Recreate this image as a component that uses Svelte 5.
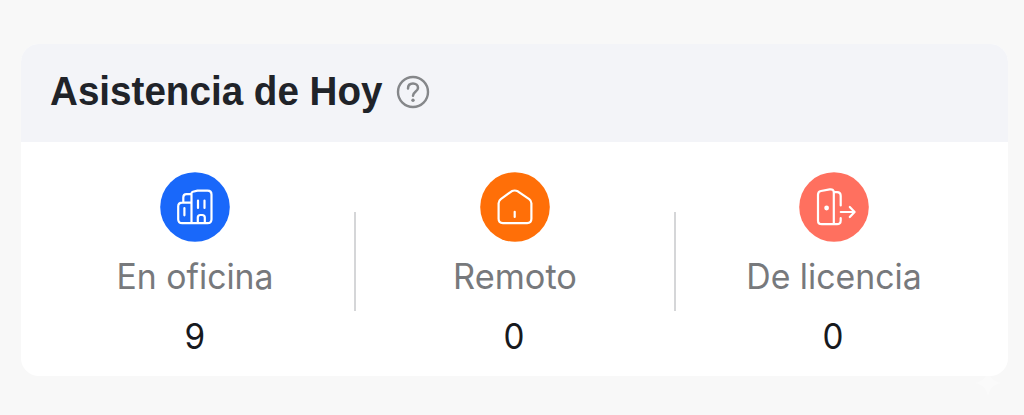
<script>
  const items = [
    { kind: 'office', label: 'En oficina', value: 9, width: 157 },
    { kind: 'remote', label: 'Remoto', value: 0, width: 124 },
    { kind: 'leave', label: 'De licencia', value: 0, width: 175.5 }
  ];
</script>

<main>
  <section class="card">
    <header>
      <h1>Asistencia de Hoy</h1>
      <svg class="help" viewBox="0 0 34 34" width="34" height="34" fill="none">
        <circle cx="17" cy="17" r="15" stroke="#85878a" stroke-width="2.4" />
        <path d="M12 13.4C12 10.3 14.1 8.5 17 8.5C19.9 8.5 22 10.3 22 12.9C22 16.5 17 16.5 17 20.8" stroke="#85878a" stroke-width="2.5" stroke-linecap="round" />
        <circle cx="17" cy="25.3" r="1.7" fill="#85878a" />
      </svg>
    </header>
    <div class="stats">
      {#each items as item}
        <div class="stat">
          <svg class="icon {item.kind}" viewBox="0 0 70 70" width="70" height="70">
            <circle class="disc" cx="35" cy="35" r="34.8" />
            {#if item.kind === 'office'}
              <path d="M31.5 51.2V21.3Q31.5 20 32.8 19.7L37.5 18.6H47.5Q51.5 18.6 51.5 22.6V47.2Q51.5 51.2 47.5 51.2H22.2Q18.2 51.2 18.2 47.2V34.5Q18.2 30.7 22.2 30.7H31.5M23.3 30.7V25.5Q23.3 22.2 26.5 22.2H31.5M24.4 36V43.3M38 28.5V36M44.5 28.5V36M37.8 51.2V45.6Q37.8 43 40.3 43H42.2Q44.8 43 44.8 45.6V51.2" />
            {:else if item.kind === 'remote'}
              <path d="M31.6 19.3Q34.7 17.7 37.8 19.3L49.2 27.1Q51.4 28.7 51.4 31.3V46.8Q51.4 51.1 47.1 51.1H22.9Q18.6 51.1 18.6 46.8V31.3Q18.6 28.7 20.8 27.1ZM34.7 39.8V45" />
            {:else}
              <path d="M22 19L30.7 17.4Q34.8 16.8 34.8 20.7V52.2H22.8Q19 52.2 19 48.4V22.7Q19 19.6 22 19ZM34.8 20.2H38Q41.7 20.2 41.7 23.9V33.4M41.7 46.2V48.5Q41.7 52.2 38 52.2H34.8M41.8 40H55.3M50.8 35L55.6 40L50.8 45" />
              <circle class="knob" cx="27.6" cy="36" r="2.4" />
            {/if}
          </svg>
          <svg class="label" width="200" height="44">
            <text x="100" y="34" text-anchor="middle" textLength={item.width} lengthAdjust="spacingAndGlyphs">{item.label}</text>
          </svg>
          <span class="value">{item.value}</span>
        </div>
      {/each}
    </div>
  </section>
  <svg class="spark" viewBox="0 0 28 28" width="28" height="28">
    <path d="M14 0Q15.5 12.5 28 14Q15.5 15.5 14 28Q12.5 15.5 0 14Q12.5 12.5 14 0Z" fill="#fff" fill-opacity=".35" />
  </svg>
</main>

<style>
  :global(body) { background: #f8f8f8; }
  main {
    box-sizing: border-box;
    position: relative;
    height: 415px;
    padding: 44px 16px 39px 21px;
    font-family: Inter, sans-serif;
  }
  .card {
    height: 332px;
    border-radius: 18px;
    overflow: hidden;
    background: #fff;
  }
  header {
    box-sizing: border-box;
    height: 98px;
    padding: 0 29px;
    display: flex;
    align-items: center;
    background: #f3f4f8;
  }
  h1 {
    margin: 0 2px 4px 0;
    width: 344px;
    white-space: nowrap;
    font: bold 40px/46px "Liberation Sans", Arial, sans-serif;
    color: #202329;
    transform: scaleX(0.965);
    transform-origin: left center;
  }
  .help { flex: none; margin-top: -3px; }
  .stats {
    display: grid;
    grid-template-columns: 319px 320px 319px;
    padding: 30px 0 0 14px;
  }
  .stat {
    display: flex;
    flex-direction: column;
    align-items: center;
    height: 190px;
  }
  .stat:nth-child(2) { padding-left: 1px; }
  .stat + .stat {
    background: linear-gradient(#d5d6d8, #d5d6d8) left 40px / 2px 99px no-repeat;
  }
  .icon path {
    fill: none;
    stroke: #fff;
    stroke-width: 2.2;
    stroke-linecap: round;
    stroke-linejoin: round;
  }
  .office .disc { fill: #1968fa; }
  .remote .disc { fill: #ff6f08; }
  .leave .disc { fill: #ff705f; }
  .knob { fill: #fff; }
  .label { margin-top: 13px; }
  .label text { font: 400 35px Inter, sans-serif; fill: #77797c; }
  .value {
    margin-top: 15px;
    font-size: 35px;
    line-height: 44px;
    color: #17191d;
    transform: scaleX(0.95);
  }
  .spark { position: absolute; left: 974px; top: 369px; }
</style>
